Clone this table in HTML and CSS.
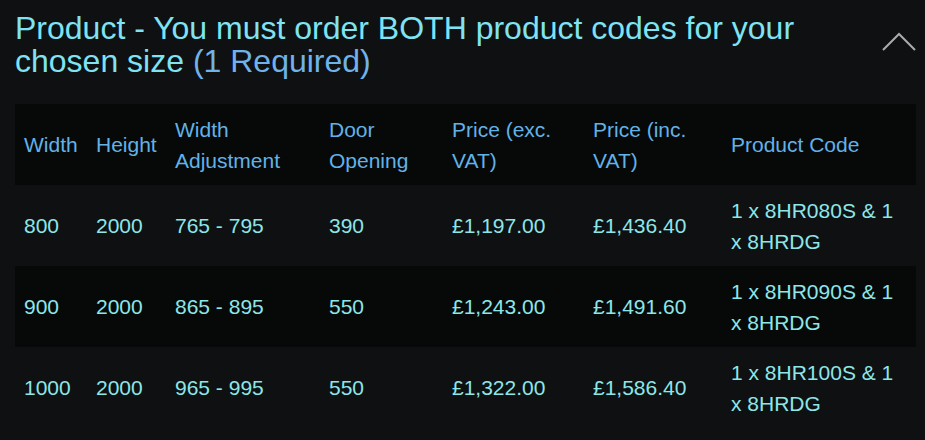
FILE: index.html
```html
<!DOCTYPE html>
<html>
<head>
<meta charset="utf-8">
<link rel="stylesheet" href="styles.css">
</head>
<body>
<div class="panel">
  <div class="panel-head">
    <h2 class="title">Product - You must order BOTH product codes for your chosen size <span class="req">(1 Required)</span></h2>
    <svg class="chevron" width="34" height="20" viewBox="0 0 34 20"><path d="M1 18 L17 2 L33 18" fill="none" stroke="#a9acae" stroke-width="2"/></svg>
  </div>
  <table class="grid">
    <colgroup>
      <col style="width:72px"><col style="width:79px"><col style="width:154px"><col style="width:123px"><col style="width:141px"><col style="width:138px"><col>
    </colgroup>
    <thead>
      <tr><th>Width</th><th>Height</th><th>Width Adjustment</th><th>Door Opening</th><th>Price (exc. VAT)</th><th>Price (inc. VAT)</th><th>Product Code</th></tr>
    </thead>
    <tbody>
      <tr><td>800</td><td>2000</td><td>765 - 795</td><td>390</td><td>£1,197.00</td><td>£1,436.40</td><td>1 x 8HR080S &amp; 1 x 8HRDG</td></tr>
      <tr class="alt"><td>900</td><td>2000</td><td>865 - 895</td><td>550</td><td>£1,243.00</td><td>£1,491.60</td><td>1 x 8HR090S &amp; 1 x 8HRDG</td></tr>
      <tr><td>1000</td><td>2000</td><td>965 - 995</td><td>550</td><td>£1,322.00</td><td>£1,586.40</td><td>1 x 8HR100S &amp; 1 x 8HRDG</td></tr>
    </tbody>
  </table>
</div>
</body>
</html>
```
FILE: styles.css
```css
html, body {
  margin: 0;
  background: #0e1012;
}
body {
  font-family: "Liberation Sans", Arial, sans-serif;
}
.panel {
  padding: 12px 9px 0 15px;
}
.panel-head {
  display: flex;
  justify-content: space-between;
  align-items: flex-start;
}
.title {
  margin: 0;
  font-weight: normal;
  font-size: 32px;
  line-height: 33px;
  color: #7fe3f2;
  max-width: 830px;
}
.req {
  color: #6fb3ea;
}
.chevron {
  margin-top: 20px;
  flex: none;
}
.grid {
  margin-top: 26px;
  width: 901px;
  border-collapse: collapse;
  table-layout: fixed;
  font-size: 21px;
  line-height: 31px;
}
.grid th, .grid td {
  text-align: left;
  font-weight: normal;
  padding: 9px 9px 9px 9px;
  height: 63px;
  vertical-align: middle;
}
.grid th {
  color: #62b2e8;
}
.grid thead tr {
  background: #070909;
}
.grid td {
  color: #8de6e8;
}
.grid tr.alt {
  background: #070909;
}
```
